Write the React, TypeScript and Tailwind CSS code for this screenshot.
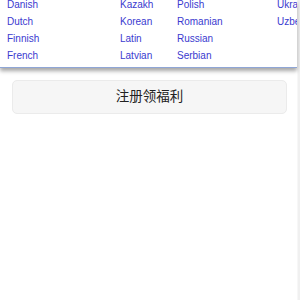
import React from "react";

const cols: { w: string; items: string[] }[] = [
  { w: "w-[113px]", items: ["Danish", "Dutch", "Finnish", "French"] },
  { w: "w-[57px]", items: ["Kazakh", "Korean", "Latin", "Latvian"] },
  { w: "w-[100px]", items: ["Polish", "Romanian", "Russian", "Serbian"] },
  { w: "w-[40px]", items: ["Ukrainian", "Uzbek"] },
];

export default function App() {
  return (
    <div className="w-[300px] h-[300px] overflow-hidden flex bg-white" style={{ fontFamily: '"Liberation Sans", Arial, "Noto Sans CJK SC", sans-serif' }}>
      <div className="w-[297px] flex flex-col">
        <div className="relative z-10 bg-white border-b border-[#8fa6d6] shadow-[0_3px_4px_rgba(0,0,0,0.35)] h-[68px] overflow-hidden">
          <div className="flex pl-[7px] mt-[-4px]">
            {cols.map((c, i) => (
              <div key={i} className={`${c.w} shrink-0 flex flex-col`}>
                {c.items.map((t) => (
                  <div key={t} className="h-[17px] leading-[17px] text-[10px] text-[#3a3acf] whitespace-nowrap">
                    {t}
                  </div>
                ))}
              </div>
            ))}
          </div>
        </div>
        <div className="pt-[12px] pl-[12px] pr-[10px]">
          <div className="h-[34px] rounded-[5px] bg-[#f6f6f6] border border-[#ebebeb] flex items-center justify-center text-[13.5px] text-[#222222]">
            注册领福利
          </div>
        </div>
      </div>
      <div className="w-[3px] h-full bg-[#f0f0f0] border-l border-[#f7f7f7]" />
    </div>
  );
}
